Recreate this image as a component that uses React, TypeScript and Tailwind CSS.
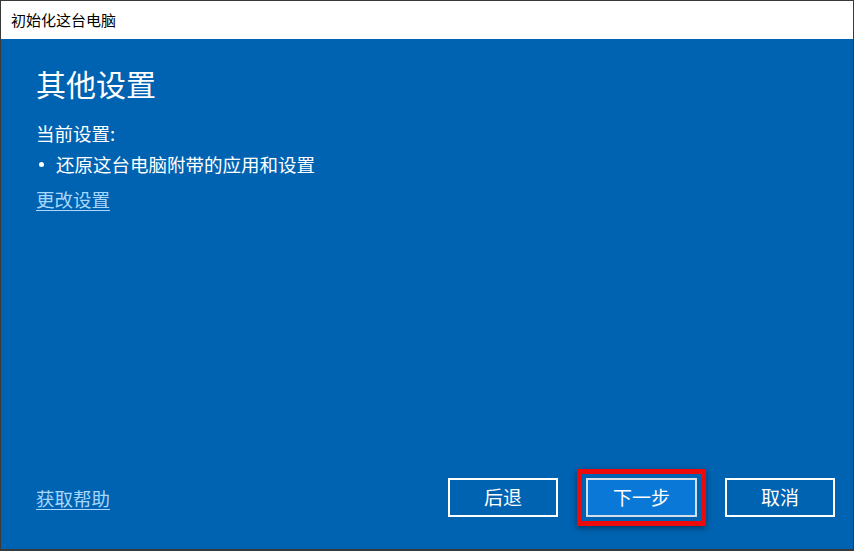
import React from 'react';

const font = { fontFamily: '"Microsoft YaHei", "Noto Sans CJK SC", "Noto Sans", sans-serif' };

const App: React.FC = () => {
  return (
    <div className="w-[854px] h-[551px] bg-[#3a3a3a] p-[1px] pb-[2px]" style={font}>
      <div className="flex flex-col h-full">
        {/* Title bar */}
        <div className="h-[38px] bg-white flex items-center pl-[10px] text-[15px] text-black">
          初始化这台电脑
        </div>

        {/* Body */}
        <div className="flex-1 bg-[#0063b1] flex flex-col px-[35px] text-white">
          <h1 className="mt-[24px] text-[30px] leading-[40px] font-normal">其他设置</h1>
          <p className="mt-[17px] text-[18.5px] leading-[26px]">当前设置:</p>
          <div className="mt-[5px] flex items-center text-[18.5px] leading-[26px]">
            <span className="ml-[3px] mr-[12px] w-[5px] h-[5px] rounded-full bg-white" />
            <span>还原这台电脑附带的应用和设置</span>
          </div>
          <a className="mt-[9px] self-start text-[18.5px] leading-[26px] text-[#a6d8ff] underline underline-offset-[3px]">
            更改设置
          </a>

          {/* Footer */}
          <div className="mt-auto mb-[23px] flex items-center">
            <a className="text-[18.5px] leading-[26px] text-[#a6d8ff] underline underline-offset-[3px]">获取帮助</a>
            <div className="ml-auto flex items-center gap-[19px] mr-[-17px]">
              <button className="w-[110px] h-[39px] border-2 border-white text-[19px] text-white">后退</button>
              <div className="border-[5px] border-[#ee0a0a] p-[4px] shadow-[0_2px_6px_rgba(0,0,0,0.45)]">
                <button className="w-[111px] h-[39px] border-2 border-[#d4dee8] bg-[#0a78d6] text-[19px] text-white">
                  下一步
                </button>
              </div>
              <button className="w-[110px] h-[39px] border-2 border-white text-[19px] text-white">取消</button>
            </div>
          </div>
        </div>
      </div>
    </div>
  );
};

export default App;
